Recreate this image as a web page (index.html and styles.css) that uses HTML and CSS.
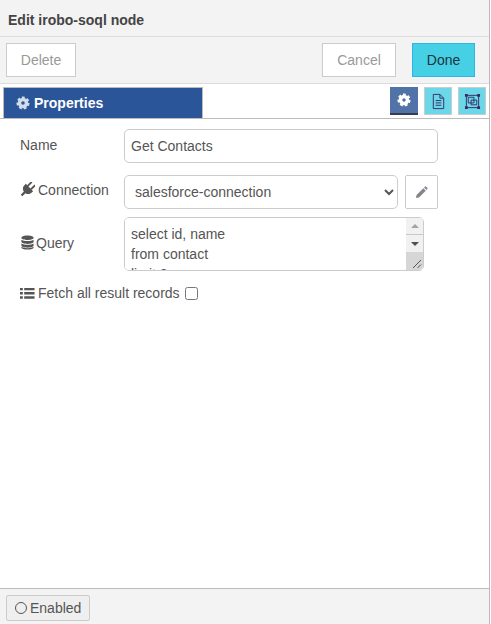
FILE: index.html
```html
<!DOCTYPE html>
<html lang="en">
<head>
    <meta charset="UTF-8">
    <meta name="viewport" content="width=device-width, initial-scale=1.0">
    <title>Edit irobo-soql node</title>
    <link rel="stylesheet" href="styles.css">
</head>
<body>
    <div class="tray">
        <div class="tray-title">Edit irobo-soql node</div>

        <div class="tray-toolbar">
            <button class="btn">Delete</button>
            <div class="toolbar-right">
                <button class="btn">Cancel</button>
                <button class="btn btn-primary">Done</button>
            </div>
        </div>

        <div class="tabs">
            <div class="tab">
                <svg class="icon" viewBox="0 0 16 16"><circle class="cog-ring" cx="8" cy="8" r="4"/><circle class="cog-teeth" cx="8" cy="8" r="6"/></svg>
                Properties
            </div>
            <div class="tab-buttons">
                <div class="tab-btn active">
                    <svg class="icon" viewBox="0 0 16 16"><circle class="cog-ring white" cx="8" cy="8" r="4"/><circle class="cog-teeth white" cx="8" cy="8" r="6"/></svg>
                </div>
                <div class="tab-btn">
                    <svg class="icon-lg" viewBox="0 0 18 18"><path class="line" d="M3.500 1.500h7l4 4v11h-11zM10.500 1.500v4h4M6 8h6M6 10.500h6M6 13h6"/></svg>
                </div>
                <div class="tab-btn">
                    <svg class="icon-lg" viewBox="0 0 18 18"><path class="line" d="M2.500 2.500h13v13h-13zM4.500 4.500h6v6h-6zM7.500 7.500h6v5h-6z"/><path class="corners" d="M1 1h3v3h-3zM14 1h3v3h-3zM1 14h3v3h-3zM14 14h3v3h-3z"/></svg>
                </div>
            </div>
        </div>

        <div class="form">
            <div class="form-row">
                <label class="form-label label-name">Name</label>
                <input class="text-input" type="text" value="Get Contacts">
            </div>
            <div class="form-row row-connection">
                <label class="form-label label-connection">
                    <svg class="icon-md" viewBox="0 0 16 16"><path class="solid" transform="rotate(45 8 8)" d="M4.500 -1h2v6h-2zM9.500 -1h2v6h-2zM2.500 5h11v2.500c0 2.500-2 4.500-4.300 4.800V17h-2.400v-4.700C4.500 12 2.500 10 2.500 7.500z"/></svg>
                    Connection
                </label>
                <select class="select-input">
                    <option>salesforce-connection</option>
                </select>
                <button class="edit-btn">
                    <svg class="icon-sm" viewBox="0 0 14 14"><path class="pencil" d="M1 13l.7-3.300 7.300-7.300 2.600 2.600-7.300 7.300z"/><path class="pencil-tip" d="M9.700 1.700l1-1c.4-.4 1-.4 1.400 0l1.200 1.200c.4.4.4 1 0 1.400l-1 1z"/></svg>
                </button>
            </div>
            <div class="form-row row-query">
                <label class="form-label label-tight">
                    <svg class="icon-md" viewBox="0 0 16 16"><path class="solid" d="M8 .5c3.600 0 6.500 1 6.500 2.400s-2.900 2.400-6.500 2.400-6.500-1-6.500-2.400S4.400.5 8 .5zM1.500 5c1 1 3.800 1.500 6.500 1.500S13.500 6 14.500 5v2.200c0 1.300-2.900 2.300-6.500 2.300s-6.500-1-6.500-2.300zM1.500 9c1 1 3.800 1.500 6.500 1.500s5.500-.5 6.500-1.500v2.200c0 1.300-2.900 2.300-6.500 2.300s-6.500-1-6.500-2.300zM1.500 12.600c1 1 3.800 1.500 6.500 1.500s5.500-.5 6.500-1.500v.6c0 1.300-2.900 2.300-6.500 2.300s-6.500-1-6.500-2.300z"/></svg>
                    Query
                </label>
                <div class="query-box">
                    <textarea class="query-input" spellcheck="false">select id, name
from contact
limit 2</textarea>
                    <div class="scrollbar">
                        <div class="scroll-btn"><span class="arrow-up"></span></div>
                        <div class="scroll-btn"><span class="arrow-down"></span></div>
                        <div class="scroll-track"></div>
                    </div>
                    <svg class="grip" viewBox="0 0 10 10"><path d="M1 9l8-8M5.500 9l3.500-3.500"/></svg>
                </div>
            </div>
            <div class="fetch-row">
                <svg class="icon-md" viewBox="0 0 16 16"><path class="solid" d="M0 2h3v2.500h-3zM4.500 2h11v2.500h-11zM0 6.500h3v2.500h-3zM4.500 6.500h11v2.500h-11zM0 11h3v2.500h-3zM4.500 11h11v2.500h-11z"/></svg>
                <span>Fetch all result records</span>
                <input class="check" type="checkbox">
            </div>
        </div>

        <div class="tray-footer">
            <button class="enabled-btn"><span class="ring"></span>Enabled</button>
        </div>
    </div>
</body>
</html>
```

FILE: styles.css
```css
* {
    box-sizing: border-box;
}
body {
    margin: 0;
    background: #fff;
    font-family: "Liberation Sans", Arial, sans-serif;
    font-size: 14px;
    color: #555;
}
.tray {
    display: flex;
    flex-direction: column;
    width: 490px;
    height: 624px;
    border-right: 1px solid #bbb;
}
.tray-title {
    height: 37px;
    padding: 12px 8px 0;
    background: #f3f3f3;
    border-bottom: 1px solid #ddd;
    font-weight: bold;
    color: #444;
}
.tray-toolbar {
    display: flex;
    justify-content: space-between;
    align-items: flex-start;
    height: 47px;
    padding: 6px 14px 0 6px;
    background: #f3f3f3;
    border-bottom: 1px solid #ddd;
}
.toolbar-right {
    display: flex;
    gap: 16px;
}
.btn {
    width: 70px;
    height: 34px;
    padding: 0;
    background: #fff;
    border: 1px solid #ccc;
    font: inherit;
    color: #999;
}
.toolbar-right .btn:first-child {
    width: 74px;
}
.btn-primary {
    width: 63px !important;
    background: #45d0e6;
    border-color: #2fb4e6;
    color: #22333f;
}
.tabs {
    display: flex;
    justify-content: space-between;
    height: 35px;
    padding: 3px 3px 0 3px;
    border-bottom: 1px solid #bbb;
}
.tab {
    display: flex;
    align-items: center;
    gap: 4px;
    width: 200px;
    height: 31px;
    padding-left: 12px;
    background: #2a5699;
    border: 1px solid #bbb;
    border-bottom: none;
    font-weight: bold;
    color: #fff;
}
.tab-buttons {
    display: flex;
    gap: 6px;
    height: 28px;
}
.tab-btn {
    display: flex;
    align-items: center;
    justify-content: center;
    width: 28px;
    height: 28px;
    background: #6ad8e8;
    border: 1px solid #ccc;
}
.tab-btn.active {
    background: #5173a8;
    border: none;
    border-bottom: 2px solid #333d55;
}
.icon {
    flex: none;
    width: 14px;
    height: 14px;
}
.icon-md {
    flex: none;
    width: 15px;
    height: 15px;
}
.icon-lg {
    width: 17px;
    height: 17px;
}
.icon-sm {
    width: 13px;
    height: 13px;
}
.cog-ring {
    fill: none;
    stroke: #d3dcea;
    stroke-width: 4;
}
.cog-teeth {
    fill: none;
    stroke: #d3dcea;
    stroke-width: 3;
    stroke-dasharray: 3 2.280;
}
.cog-ring.white,
.cog-teeth.white {
    stroke: #fff;
}
.line {
    fill: none;
    stroke: #3a2a66;
    stroke-width: 1;
}
.corners {
    fill: #3a2a66;
}
.solid {
    fill: #555;
}
.pencil {
    fill: #858585;
}
.pencil-tip {
    fill: #7d8ea3;
}
.form {
    flex: 1;
    display: flex;
    flex-direction: column;
    padding: 10px 0 0 20px;
}
.form-row {
    display: flex;
    align-items: flex-start;
}
.row-connection {
    margin-top: 12px;
}
.row-query {
    margin-top: 8px;
    align-items: center;
}
.form-label {
    display: flex;
    align-items: center;
    gap: 3px;
    width: 104px;
    height: 30px;
    padding-bottom: 3px;
}
.label-name {
    height: 34px;
}
.label-connection {
    height: 32px;
}
.label-tight {
    gap: 1px;
}
.text-input {
    width: 314px;
    height: 34px;
    padding: 0 6px;
    background: #fff;
    border: 1px solid #ccc;
    border-radius: 5px;
    font: inherit;
    color: #555;
}
.select-input {
    width: 274px;
    height: 34px;
    padding: 0 6px;
    background: #fff;
    border: 1px solid #ccc;
    border-radius: 5px;
    font: inherit;
    color: #555;
}
.edit-btn {
    display: flex;
    align-items: center;
    justify-content: center;
    width: 33px;
    height: 34px;
    margin-left: 7px;
    padding: 0;
    background: #fff;
    border: 1px solid #ccc;
    border-radius: 2px;
}
.query-box {
    position: relative;
    width: 300px;
    height: 54px;
    overflow: hidden;
    border: 1px solid #ccc;
    border-radius: 5px;
}
.query-input {
    display: block;
    width: 100%;
    height: 100%;
    padding: 6px;
    overflow: hidden;
    border: none;
    outline: none;
    resize: none;
    font: inherit;
    line-height: 20px;
    color: #555;
}
.scrollbar {
    position: absolute;
    top: 0;
    right: 0;
    bottom: 0;
    display: flex;
    flex-direction: column;
    width: 17px;
    background: #f1f1f1;
}
.scroll-btn {
    display: flex;
    align-items: center;
    justify-content: center;
    height: 17px;
}
.scroll-btn:first-child {
    border-bottom: 1px solid #c9c9c9;
}
.scroll-track {
    flex: 1;
    background: #d6d6d6;
}
.arrow-up {
    border: 4px solid transparent;
    border-top: none;
    border-bottom: 4px solid #a3a3a3;
}
.arrow-down {
    border: 4px solid transparent;
    border-bottom: none;
    border-top: 4px solid #505050;
}
.grip {
    position: absolute;
    right: 1px;
    bottom: 1px;
    width: 10px;
    height: 10px;
    fill: none;
    stroke: #555;
    stroke-width: 1;
}
.fetch-row {
    display: flex;
    align-items: center;
    gap: 3px;
    margin-top: 14px;
    height: 16px;
}
.check {
    width: 13px;
    height: 13px;
    margin: 1px 0 0 2px;
}
.tray-footer {
    height: 36px;
    padding: 6px;
    background: #f3f3f3;
    border-top: 1px solid #bbb;
}
.enabled-btn {
    display: flex;
    align-items: center;
    gap: 3px;
    width: 84px;
    height: 26px;
    padding: 0 0 0 8px;
    background: #efefef;
    border: 1px solid #ccc;
    border-radius: 2px;
    font: inherit;
    color: #555;
}
.ring {
    width: 12px;
    height: 12px;
    border: 1px solid #555;
    border-radius: 50%;
}
```
